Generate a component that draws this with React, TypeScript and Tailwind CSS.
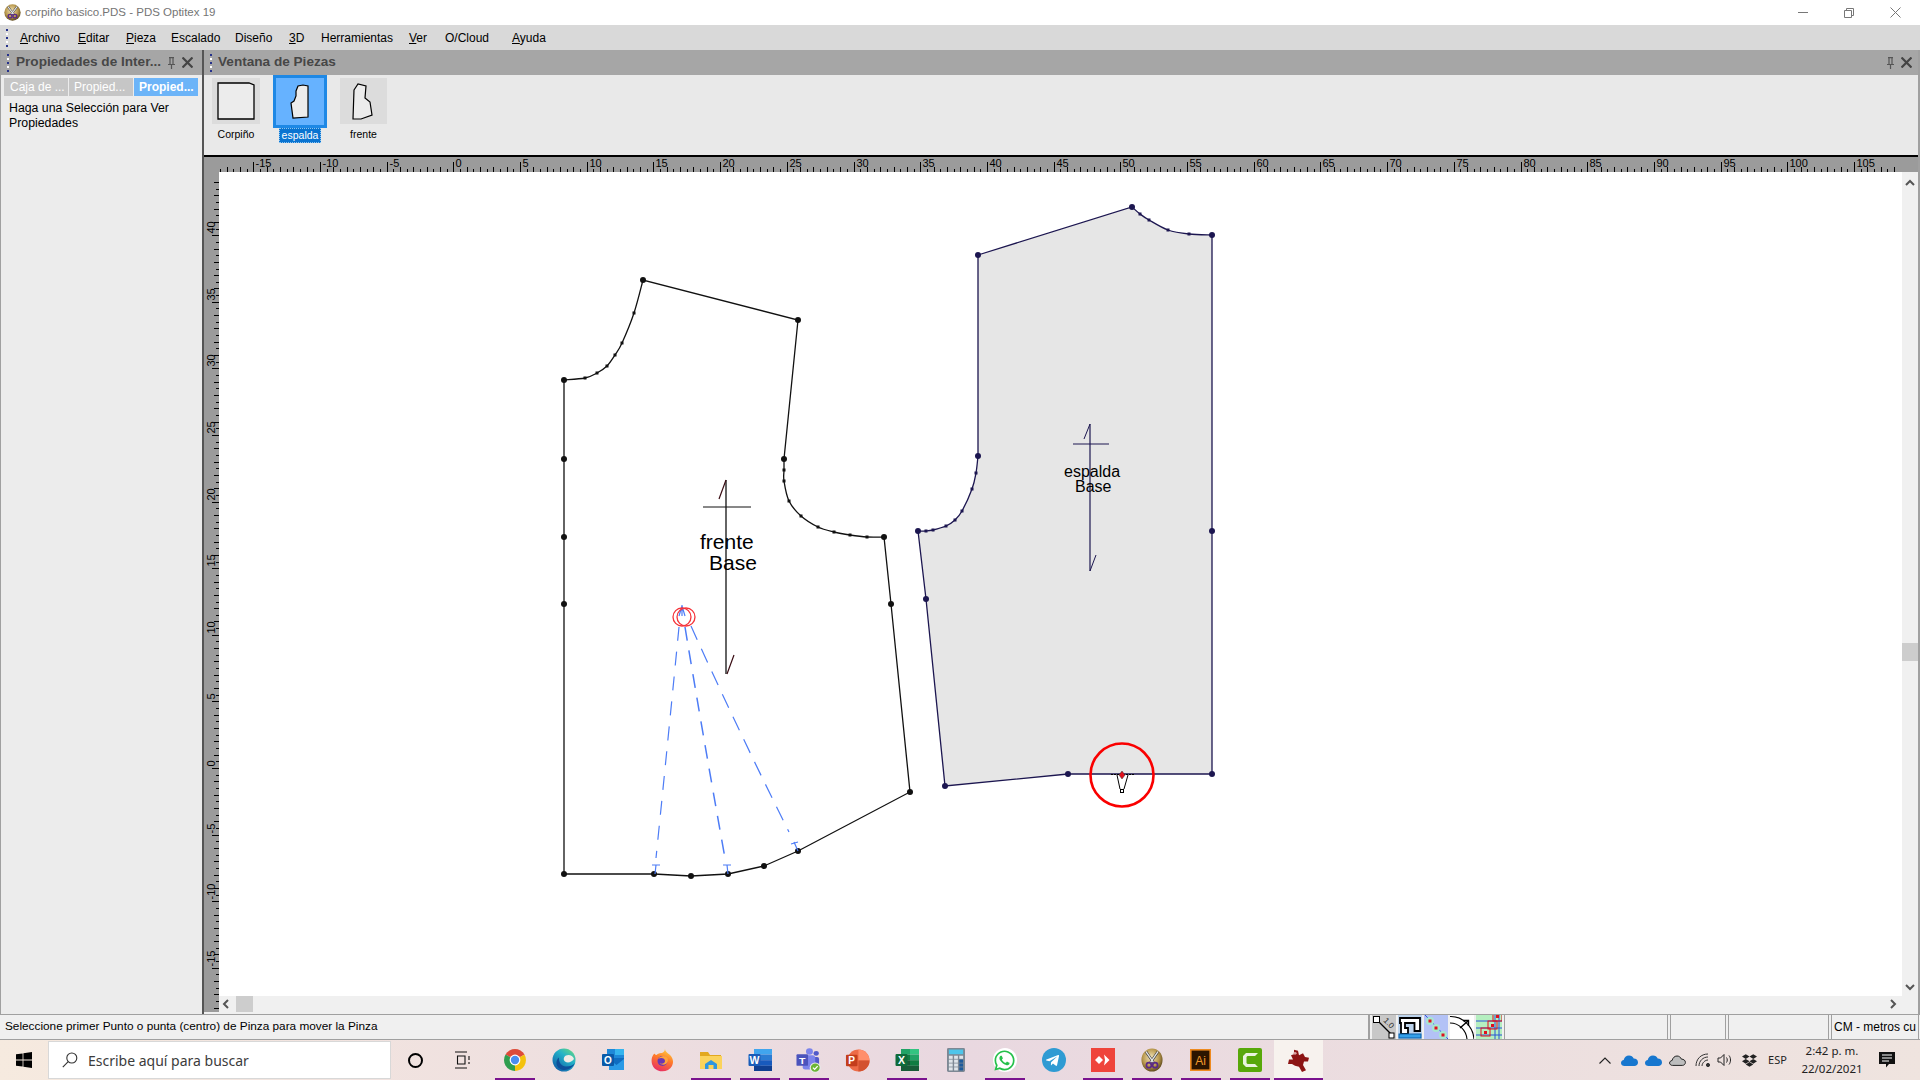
import { FaTelegramPlane, FaWhatsapp, FaDropbox } from "react-icons/fa";

type Pt = [number, number];

const menuItems: { label: string; key?: string; rest: string; w: string }[] = [
  { label: "Archivo", key: "A", rest: "rchivo", w: "w-[58px]" },
  { label: "Editar", key: "E", rest: "ditar", w: "w-[48px]" },
  { label: "Pieza", key: "P", rest: "ieza", w: "w-[45px]" },
  { label: "Escalado", rest: "Escalado", w: "w-[64px]" },
  { label: "Diseño", rest: "Diseño", w: "w-[54px]" },
  { label: "3D", key: "3", rest: "D", w: "w-[32px]" },
  { label: "Herramientas", rest: "Herramientas", w: "w-[88px]" },
  { label: "Ver", key: "V", rest: "er", w: "w-[36px]" },
  { label: "O/Cloud", rest: "O/Cloud", w: "w-[67px]" },
  { label: "Ayuda", key: "A", rest: "yuda", w: "w-[50px]" },
];

// Catmull-Rom through the points, for the curved seams
const smooth = (pts: Pt[]) => {
  let d = "";
  for (let i = 0; i < pts.length - 1; i++) {
    const p0 = pts[Math.max(i - 1, 0)];
    const p1 = pts[i];
    const p2 = pts[i + 1];
    const p3 = pts[Math.min(i + 2, pts.length - 1)];
    const c1 = [p1[0] + (p2[0] - p0[0]) / 6, p1[1] + (p2[1] - p0[1]) / 6];
    const c2 = [p2[0] - (p3[0] - p1[0]) / 6, p2[1] - (p3[1] - p1[1]) / 6];
    d += ` C${c1[0]} ${c1[1]} ${c2[0]} ${c2[1]} ${p2[0]} ${p2[1]}`;
  }
  return d;
};

const frenteNeck: Pt[] = [[564, 380], [585, 378], [597, 373], [607, 366], [615, 355], [622, 343], [634, 313], [643, 280]];
const frenteArm: Pt[] = [[784, 459], [784, 470], [784, 481], [789, 501], [801, 516], [818, 527], [834, 532], [850, 535], [867, 537], [884, 537]];
const frenteRest: Pt[] = [[891, 604], [910, 792], [798, 851], [764, 866], [728, 874], [691, 876], [654, 874], [564, 874], [564, 604], [564, 537], [564, 459]];

const espaldaNeck: Pt[] = [[1132, 207], [1140, 214], [1149, 220], [1168, 230], [1189, 234], [1212, 235]];
const espaldaArm: Pt[] = [[918, 531], [926, 531], [933, 530], [946, 526], [955, 520], [962, 511], [972, 489], [976, 473], [978, 456]];

const Dots = ({ pts, color, r = 3 }: { pts: Pt[]; color: string; r?: number }) => (
  <>
    {pts.map(([x, y], i) => (
      <circle key={i} cx={x} cy={y} r={r} fill={color} />
    ))}
  </>
);

const Squares = ({ pts, color }: { pts: Pt[]; color: string }) => (
  <>
    {pts.map(([x, y], i) => (
      <rect key={i} x={x - 1.5} y={y - 1.5} width={3} height={3} fill={color} />
    ))}
  </>
);

const PatternCanvas = () => {
  const black = "#111111";
  const navy = "#1c1650";
  const blue = "#4d7cf6";
  const frentePath =
    `M564 380${smooth(frenteNeck)} L798 320 L784 459${smooth(frenteArm)} ` +
    frenteRest.map((p) => `L${p[0]} ${p[1]}`).join(" ") +
    " Z";
  const espaldaPath =
    `M978 255 L1132 207${smooth(espaldaNeck)} L1212 774 L1068 774 L945 786 L926 599 L918 531${smooth(espaldaArm)} Z`;
  return (
    <svg className="block flex-1 h-full bg-white" viewBox="219 172 1683 824" width={1683} height={824}>
      {/* frente */}
      <path d={frentePath} fill="none" stroke={black} strokeWidth={1.3} />
      <Squares pts={frenteNeck.slice(1, -1)} color={black} />
      <Squares pts={frenteArm.slice(1, -1)} color={black} />
      <Dots
        pts={[[564, 380], [643, 280], [798, 320], [784, 459], [884, 537], [891, 604], [910, 792], [798, 851], [764, 866], [728, 874], [691, 876], [654, 874], [564, 874], [564, 604], [564, 537], [564, 459]]}
        color={black}
      />
      <path d="M726 480 L726 674" stroke={black} strokeWidth={1.3} />
      <path d="M703 507 L751 507" stroke={black} strokeWidth={1} />
      <path d="M726 480 L719 499 M727 674 L734 655" stroke="#3a0d14" strokeWidth={1.2} />
      <text x={700} y={549} fontSize={21} fontFamily="'Liberation Sans', sans-serif" fill="#000">frente</text>
      <text x={709} y={570} fontSize={21} fontFamily="'Liberation Sans', sans-serif" fill="#000">Base</text>

      {/* pinzas */}
      <g fill="none" stroke={blue} strokeWidth={1.2}>
        <path d="M679 627 Q668 740 656 858" strokeDasharray="14 11" />
        <path d="M685 627 Q702 730 725 858" strokeDasharray="14 10" strokeWidth={1.5} />
        <path d="M691 626 Q738 730 789 832" strokeDasharray="15 10" />
        <path d="M652 865 L660 865 M656 865 L655 874 M723 865 L731 865 M727 865 L728 874 M791 844 L798 842 M794 842 L798 851" />
        <path d="M682 605 L682 616 M682 606 L679 616 M682 606 L685 616" />
      </g>
      <circle cx={682} cy={617} r={9} fill="none" stroke="#f5333a" strokeWidth={1.3} />
      <circle cx={686} cy={617} r={9} fill="none" stroke="#f5333a" strokeWidth={1.3} />

      {/* espalda */}
      <path d={espaldaPath} fill="#e6e6e6" stroke={navy} strokeWidth={1.3} />
      <Squares pts={espaldaNeck.slice(1, -1)} color={navy} />
      <Squares pts={espaldaArm.slice(1, -1)} color={navy} />
      <Dots
        pts={[[978, 255], [1132, 207], [1212, 235], [1212, 531], [1212, 774], [1068, 774], [945, 786], [926, 599], [918, 531], [978, 456]]}
        color={navy}
      />
      <path d="M1090 424 L1090 571" stroke={navy} strokeWidth={1.2} />
      <path d="M1073 444 L1109 444" stroke={navy} strokeWidth={1} />
      <path d="M1090 424 L1084 439 M1090 571 L1096 555" stroke={navy} strokeWidth={1} />
      <text x={1064} y={477} fontSize={16} fontFamily="'Liberation Sans', sans-serif" fill="#000">espalda</text>
      <text x={1075} y={492} fontSize={16} fontFamily="'Liberation Sans', sans-serif" fill="#000">Base</text>

      {/* pinza a mover */}
      <path d="M1111 774.5 L1134 774.5" stroke="#000" strokeWidth={1.2} strokeDasharray="2 1" />
      <path d="M1117 775 L1120 789 M1128 775 L1124 789" stroke="#000" strokeWidth={1} />
      <rect x={1120.5} y={789.5} width={3} height={3} fill="#fff" stroke="#000" />
      <path d="M1122 771 L1125 775 L1122 779 L1119 775 Z" fill="#e0101c" stroke="#333" strokeWidth={0.5} />
      <circle cx={1122} cy={775} r={31.5} fill="none" stroke="#fa0000" strokeWidth={2.6} />
    </svg>
  );
};

const TopRuler = () => {
  const ticks = [];
  for (let i = -35; i <= 216; i++) {
    const x = Math.round(453.3 + i * 6.67) + 0.5 - 204;
    if (i % 10 === 0) {
      ticks.push(<path key={i} d={`M${x} 5 V15`} stroke="#000" />);
      ticks.push(
        <text key={`t${i}`} x={x + 2} y={10} fontSize={11} fontFamily="'Liberation Sans', sans-serif" fill="#000">
          {i / 2}
        </text>
      );
    } else {
      ticks.push(<path key={i} d={`M${x} ${i % 2 === 0 ? 10 : 12} V15`} stroke="#000" />);
    }
  }
  return (
    <svg className="block shrink-0 bg-[#9b9b9b]" width={1714} height={15}>
      {ticks}
    </svg>
  );
};

const LeftRuler = () => {
  const ticks = [];
  for (let i = -36; i <= 88; i++) {
    const y = Math.round(768 - i * 6.66) + 0.5 - 172;
    const val = i / 2;
    if (i % 10 === 0) {
      ticks.push(<path key={i} d={`M8 ${y} H15`} stroke="#000" />);
      ticks.push(
        <text
          key={`t${i}`}
          transform={`translate(11 ${y - 2}) rotate(-90)`}
          fontSize={11}
          fontFamily="'Liberation Sans', sans-serif"
          fill="#000"
        >
          {val}
        </text>
      );
    } else {
      ticks.push(<path key={i} d={`M${i % 2 === 0 ? 10 : 12} ${y} H15`} stroke="#000" />);
    }
  }
  return (
    <svg className="block shrink-0 bg-[#9b9b9b]" width={15} height={840}>
      {ticks}
    </svg>
  );
};

const Grip = () => (
  <div className="flex flex-col gap-[2px] w-[2px]">
    {[0, 1, 2, 3, 4].map((i) => (
      <div key={i} className={`w-[2px] h-[2px] ${i % 2 === 0 ? "bg-[#26328c]" : "bg-white"}`} />
    ))}
  </div>
);

const PinIcon = () => (
  <svg width="9" height="12" viewBox="0 0 9 12" fill="none" stroke="#555" strokeWidth="1.2">
    <path d="M2 0.7H7 M3 1V7 M6 1V7 M1 7.5H8 M4.5 8V12" />
  </svg>
);

const CloseX = () => (
  <svg width="11" height="11" viewBox="0 0 11 11" stroke="#444" strokeWidth="2.2">
    <path d="M0.5 0.5L10.5 10.5M10.5 0.5L0.5 10.5" />
  </svg>
);

const OptitexLogo = ({ w = 17, h = 17, id }: { w?: number; h?: number; id: string }) => (
  <svg width={w} height={h} viewBox="0 0 24 26" preserveAspectRatio="none">
    <defs>
      <radialGradient id={id} cx="0.45" cy="0.4" r="0.65">
        <stop offset="0" stopColor="#f3e6bd" />
        <stop offset="0.6" stopColor="#b8974b" />
        <stop offset="1" stopColor="#4c3a14" />
      </radialGradient>
    </defs>
    <ellipse cx="12" cy="13" rx="11.5" ry="12.5" fill={`url(#${id})`} />
    <path d="M5.5 4L14.5 17M18.5 4L9.5 17" stroke="#3d3d3d" strokeWidth="2.8" />
    <path d="M5.5 4L14.5 17M18.5 4L9.5 17" stroke="#e6e6e6" strokeWidth="1.5" />
    <circle cx="8.6" cy="18.6" r="2.7" fill="none" stroke="#5b2a86" strokeWidth="1.9" />
    <circle cx="15.4" cy="18.6" r="2.7" fill="none" stroke="#5b2a86" strokeWidth="1.9" />
  </svg>
);

const Chrome = () => (
  <svg width="24" height="24" viewBox="0 0 24 24">
    <path d="M12 12L2.5 6.5A11 11 0 0 1 21.5 6.5Z" fill="#dd4b39" />
    <path d="M12 12L21.5 6.5A11 11 0 0 1 12 23Z" fill="#f4c20d" />
    <path d="M12 12L12 23A11 11 0 0 1 2.5 6.5Z" fill="#2f9e4f" />
    <circle cx="12" cy="12" r="5.4" fill="#fff" />
    <circle cx="12" cy="12" r="4.2" fill="#4a8df0" />
  </svg>
);

const Edge = () => (
  <svg width="24" height="24" viewBox="0 0 24 24">
    <defs>
      <linearGradient id="edgeG" x1="0.9" y1="0.1" x2="0.2" y2="1">
        <stop offset="0" stopColor="#5fd38a" />
        <stop offset="0.35" stopColor="#25b3c8" />
        <stop offset="1" stopColor="#0f5ca8" />
      </linearGradient>
    </defs>
    <circle cx="12" cy="12" r="11.5" fill="url(#edgeG)" />
    <path d="M23 15C20 21 13 24 7.5 20.5C3.5 18 3.5 12 7 9.5C6.3 14 9.5 18.5 14 18.5C18 18.5 21 17.5 23 15Z" fill="#0e4f9a" />
    <path d="M22 11C21 7.5 17 6 14 7.5C11.5 8.7 11 12 13 13.5C15.5 15.3 19.5 14.5 22 11Z" fill="#f1ece6" />
  </svg>
);

const Outlook = () => (
  <svg width="24" height="24" viewBox="0 0 24 24">
    <rect x="6" y="1" width="17" height="11" fill="#1e88d8" />
    <rect x="14" y="1" width="9" height="6" fill="#35b4ee" />
    <path d="M8 10H23V22H8Z" fill="#0f6cc0" />
    <path d="M8 11L15.5 17L23 11V22H8Z" fill="#2a9ae6" />
    <rect x="1" y="6" width="12" height="12" rx="1" fill="#0a5aa8" />
    <text x="7" y="15.5" fontSize="10" fontWeight="700" textAnchor="middle" fill="#fff" fontFamily="'Liberation Sans', sans-serif">O</text>
  </svg>
);

const Firefox = () => (
  <svg width="24" height="24" viewBox="0 0 24 24">
    <defs>
      <linearGradient id="ffG" x1="0.7" y1="0" x2="0.3" y2="1">
        <stop offset="0" stopColor="#ffd23f" />
        <stop offset="0.45" stopColor="#ff7a2a" />
        <stop offset="1" stopColor="#e72b66" />
      </linearGradient>
    </defs>
    <path d="M15 0.5C15 4 18 5 20 7C23 10 24 14 22 18C19.5 23 13 24.5 8 22.5C3 20.5 0.5 15 2 9.5C3 6.5 4.5 5 5 6C5.5 7 6 7.5 7 6.5C8.5 5 11 5 12 5C14 4 15 2.5 15 0.5Z" fill="url(#ffG)" />
    <circle cx="12.5" cy="13" r="5" fill="#6a37b4" />
    <path d="M8 11C11 9 15 10 15 13C15 15.5 11.5 16.5 9.5 15C12 18 18 17 18 12C18 8 12 6 8 11Z" fill="#ffa33a" />
  </svg>
);

const Folder = () => (
  <svg width="24" height="24" viewBox="0 0 24 24">
    <path d="M1 4H9L11 7H22V20H1Z" fill="#e2a81f" />
    <rect x="1" y="8" width="22" height="13" fill="#fbd35c" />
    <path d="M6 21V16L12 12L18 16V21H14.5V17H9.5V21Z" fill="#2f96e0" />
  </svg>
);

const Word = () => (
  <svg width="24" height="24" viewBox="0 0 24 24">
    <rect x="6" y="1" width="18" height="5.6" fill="#41a5ee" />
    <rect x="6" y="6.6" width="18" height="5.6" fill="#2b7cd3" />
    <rect x="6" y="12.2" width="18" height="5.6" fill="#185abd" />
    <rect x="6" y="17.8" width="18" height="5.2" fill="#103f91" />
    <rect x="0.5" y="6" width="12" height="12" rx="1" fill="#1a5cb8" />
    <text x="6.5" y="15.8" fontSize="10.5" fontWeight="700" textAnchor="middle" fill="#fff" fontFamily="'Liberation Sans', sans-serif">W</text>
  </svg>
);

const Teams = () => (
  <svg width="25" height="25" viewBox="0 0 26 28" preserveAspectRatio="none">
    <circle cx="14" cy="4" r="3.6" fill="#7b83eb" />
    <circle cx="21" cy="6" r="2.7" fill="#5059c9" />
    <rect x="16" y="10" width="8" height="11" rx="2" fill="#5059c9" />
    <rect x="7" y="8" width="13" height="16" rx="2.5" fill="#7b83eb" />
    <rect x="0.5" y="7" width="12" height="13" rx="1" fill="#4b53bc" />
    <text x="6.5" y="17.5" fontSize="11" fontWeight="700" textAnchor="middle" fill="#fff" fontFamily="'Liberation Sans', sans-serif">T</text>
    <circle cx="20" cy="22" r="5.8" fill="#e8e8e8" />
    <circle cx="20" cy="22" r="4.6" fill="#6bb536" />
    <path d="M17.6 22L19.4 24L22.5 20.2" fill="none" stroke="#fff" strokeWidth="1.3" />
  </svg>
);

const PowerPoint = () => (
  <svg width="25" height="25" viewBox="0 0 26 26">
    <circle cx="14" cy="13" r="11.5" fill="#ed6c47" />
    <path d="M14 1.5A11.5 11.5 0 0 1 25.5 13H14Z" fill="#ff8f6b" />
    <path d="M14 13H25.5A11.5 11.5 0 0 1 14 24.5Z" fill="#d35230" />
    <rect x="1" y="7" width="12" height="12" rx="1" fill="#c43e1c" />
    <text x="7" y="16.8" fontSize="10.5" fontWeight="700" textAnchor="middle" fill="#fff" fontFamily="'Liberation Sans', sans-serif">P</text>
  </svg>
);

const Excel = () => (
  <svg width="24" height="24" viewBox="0 0 24 24">
    <rect x="6" y="1" width="9" height="5.6" fill="#21a366" />
    <rect x="15" y="1" width="9" height="5.6" fill="#33c481" />
    <rect x="6" y="6.6" width="9" height="5.6" fill="#107c41" />
    <rect x="15" y="6.6" width="9" height="5.6" fill="#21a366" />
    <rect x="6" y="12.2" width="9" height="5.6" fill="#185c37" />
    <rect x="15" y="12.2" width="9" height="5.6" fill="#107c41" />
    <rect x="6" y="17.8" width="18" height="5.2" fill="#185c37" />
    <rect x="0.5" y="6" width="12" height="12" rx="1" fill="#0f6b3a" />
    <text x="6.5" y="15.8" fontSize="10.5" fontWeight="700" textAnchor="middle" fill="#fff" fontFamily="'Liberation Sans', sans-serif">X</text>
  </svg>
);

const Calculator = () => (
  <svg width="18" height="24" viewBox="0 0 19 31" preserveAspectRatio="none">
    <rect width="19" height="31" rx="1.5" fill="#7d8894" />
    <rect x="2" y="2" width="15" height="6" fill="#4ec5ea" />
    {[10, 15, 20, 25].map((y) =>
      [2, 7.5, 13].map((x) => (
        <rect key={`${x}-${y}`} x={x} y={y} width="4" height="4" fill={x === 13 && y >= 15 ? "#1c5a9c" : "#dfe5ea"} />
      ))
    )}
  </svg>
);

const WhatsApp = () => (
  <div className="w-[24px] h-[24px] rounded-full bg-white flex items-center justify-center">
    <FaWhatsapp className="w-[23px] h-[23px] text-[#25c04a]" />
  </div>
);

const Telegram = () => (
  <div className="w-[24px] h-[24px] rounded-full bg-[#2f9bd3] flex items-center justify-center">
    <FaTelegramPlane className="w-[15px] h-[15px] text-white -ml-[2px]" />
  </div>
);

const AnyDesk = () => (
  <svg width="24" height="24" viewBox="0 0 24 24">
    <rect width="24" height="24" fill="#ef443b" />
    <path d="M8 8L12 12L8 16L4 12Z" fill="#fff" />
    <path d="M13 6.5L18.5 12L13 17.5L14 12Z" fill="#fff" />
  </svg>
);

const Illustrator = () => (
  <svg width="21" height="22" viewBox="0 0 21 22">
    <rect x="0.8" y="0.8" width="19.4" height="20.4" fill="#2b1500" stroke="#ee8a20" strokeWidth="1.6" />
    <text x="10.5" y="15.5" fontSize="12" textAnchor="middle" fill="#f29a2c" fontFamily="'Liberation Sans', sans-serif">Ai</text>
  </svg>
);

const Camtasia = () => (
  <svg width="24" height="24" viewBox="0 0 24 24">
    <rect width="24" height="24" rx="2" fill="#58a80a" />
    <path d="M20 5H8L5 8V16L8 19H20L17 16H9.5L8.5 15V9L9.5 8H17Z" fill="#e9f3dd" />
  </svg>
);

const Splat = () => (
  <svg width="24" height="25" viewBox="0 0 24 28" preserveAspectRatio="none">
    <path d="M7 2L11 3L12 8L16 6L18 10L22 11L21 15L17 15L16 19L19 25L15 27L12 21L8 20L5 18L1 18L2 13L6 13L4 8L7 7Z" fill="#8c1414" />
    <circle cx="8" cy="6" r="1.6" fill="#d9a4a4" />
  </svg>
);

const taskbarApps = [
  { icon: <Chrome />, open: true },
  { icon: <Edge />, open: false },
  { icon: <Outlook />, open: false },
  { icon: <Firefox />, open: false },
  { icon: <Folder />, open: true },
  { icon: <Word />, open: true },
  { icon: <Teams />, open: true },
  { icon: <PowerPoint />, open: false },
  { icon: <Excel />, open: true },
  { icon: <Calculator />, open: false },
  { icon: <WhatsApp />, open: true },
  { icon: <Telegram />, open: false },
  { icon: <AnyDesk />, open: true },
  { icon: <OptitexLogo w={22} h={24} id="goldTask" />, open: true },
  { icon: <Illustrator />, open: true },
  { icon: <Camtasia />, open: true },
];

const OneDrive = ({ color }: { color: string }) => (
  <svg width="17" height="11" viewBox="0 0 17 11">
    <path d="M3.5 11C1.5 11 0 9.7 0 8C0 6.5 1.2 5.3 2.7 5.1C3.2 2.6 5.3 0.5 8 0.5C10.2 0.5 11.9 1.8 12.7 3.6C15.2 3.6 17 5.3 17 7.4C17 9.4 15.4 11 13.3 11Z" fill={color} />
  </svg>
);

const StatusIcons = () => (
  <div className="flex items-stretch gap-[2px] w-[130px] h-[24px] overflow-hidden shrink-0">
    <svg width="24" height="24" viewBox="0 0 24 24" className="bg-[#c8c8c8] shrink-0">
      <path d="M4 4L21 21" stroke="#000" strokeWidth="1.2" />
      <rect x="1.5" y="1.5" width="6" height="6" fill="#fff" stroke="#000" />
      <rect x="17" y="18" width="5" height="5" fill="#fff" stroke="#000" />
      <text x="11" y="6" fontSize="8" fontFamily="'Liberation Sans', sans-serif" fill="#222" transform="rotate(45 11 6)">1.0</text>
    </svg>
    <svg width="24" height="24" viewBox="0 0 24 24" className="bg-[#bcd3ec] shrink-0">
      <path d="M2 3H22V16H16.5V8H7V13H10V19H3V8H2Z" fill="#fff" stroke="#000" strokeWidth="1.8" />
      <rect x="1" y="19" width="22" height="4" fill="#35a0e8" stroke="#0b5fa8" />
    </svg>
    <svg width="24" height="24" viewBox="0 0 24 24" className="bg-[#b3c2f6] shrink-0">
      <path d="M1 0L24 24" stroke="#2a55d6" />
      <circle cx="6" cy="6" r="4" fill="#a7e8cf" />
      <circle cx="12" cy="13" r="4" fill="#a7e8cf" />
      <circle cx="19" cy="20" r="4" fill="#a7e8cf" />
      <rect x="4.5" y="4.5" width="3" height="3" fill="#e0101c" />
      <rect x="10.5" y="11.5" width="3" height="3" fill="#e0101c" />
      <rect x="17.5" y="18.5" width="3" height="3" fill="#e0101c" />
    </svg>
    <svg width="24" height="24" viewBox="0 0 24 24" className="bg-white shrink-0" fill="none" stroke="#000" strokeWidth="1.1">
      <path d="M0 1.5C12 1 23 11 24 24M0 8C9 8 16 15 17 24" />
      <path d="M10 13L18 6M13 5.5L18.5 5.5L18.5 11" strokeWidth="1.4" />
    </svg>
    <svg width="26" height="24" viewBox="0 0 26 24" className="bg-[#b5efc0] shrink-0" fill="none">
      <path d="M0 6H26M0 13H26M0 20H26" stroke="#2a55d6" />
      <path d="M19 0V24M23 0V24" stroke="#2a55d6" />
      <rect x="17" y="-2" width="9" height="8" stroke="#e0101c" />
      <rect x="12" y="6" width="9" height="8" stroke="#e0101c" />
      <rect x="5" y="13" width="9" height="8" stroke="#e0101c" />
      <rect x="20" y="0" width="3" height="3" fill="#e0101c" />
      <rect x="15" y="9" width="3" height="3" fill="#e0101c" />
      <rect x="8" y="16" width="3" height="3" fill="#e0101c" />
    </svg>
  </div>
);

export default function App() {
  const sans = "font-['Liberation_Sans',Arial,sans-serif]";
  return (
    <div className={`w-[1920px] h-[1080px] flex flex-col overflow-hidden bg-[#f0f0f0] ${sans} text-[12px] text-black`}>
      {/* title bar */}
      <div className="h-[25px] shrink-0 bg-white flex items-center pl-[4px] text-[#757575]">
        <OptitexLogo id="goldTitle" />
        <span className="ml-[4px] text-[11.5px]">corpiño basico.PDS - PDS Optitex 19</span>
        <div className="ml-auto flex items-center">
          <div className="w-[46px] flex justify-center">
            <div className="w-[10px] h-px bg-[#777]" />
          </div>
          <div className="w-[46px] flex justify-center">
            <svg width="10" height="10" viewBox="0 0 10 10" fill="none" stroke="#777">
              <path d="M2.5 2.5V0.5H9.5V7.5H7.5M0.5 2.5H7.5V9.5H0.5Z" />
            </svg>
          </div>
          <div className="w-[46px] flex justify-center mr-[2px]">
            <svg width="11" height="11" viewBox="0 0 11 11" stroke="#777">
              <path d="M0.5 0.5L10.5 10.5M10.5 0.5L0.5 10.5" />
            </svg>
          </div>
        </div>
      </div>

      {/* menu */}
      <div className="h-[25px] shrink-0 bg-[#d9d9d9] flex items-center pl-[6px] pr-[2px]">
        <div className="w-[14px]">
          <Grip />
        </div>
        {menuItems.map((m) => (
          <div key={m.label} className={m.w}>
            {m.key && <span className="underline">{m.key}</span>}
            {m.rest}
          </div>
        ))}
      </div>

      {/* main */}
      <div className="h-[964px] shrink-0 flex border-l border-[#a0a0a0] border-r-2 border-r-[#a0a0a0]">
        {/* left panel */}
        <div className="w-[201px] shrink-0 flex flex-col bg-[#ececec]">
          <div className="h-[25px] bg-[#a6a6a6] flex items-center pl-[6px] text-[#474747]">
            <Grip />
            <span className="ml-[7px] text-[13.6px] font-bold whitespace-nowrap">Propiedades de Inter...</span>
            <div className="ml-[6px]">
              <PinIcon />
            </div>
            <div className="ml-[6px]">
              <CloseX />
            </div>
          </div>
          <div className="flex gap-px pl-[3px] mt-[3px] h-[18px] text-white">
            <div className="w-[64px] bg-[#c6c6c6] flex items-center pl-[6px]">Caja de ...</div>
            <div className="w-[64px] bg-[#c6c6c6] flex items-center pl-[5px]">Propied...</div>
            <div className="w-[64px] bg-[#6cb4f8] flex items-center pl-[5px] font-bold">Propied...</div>
          </div>
          <p className="mt-[5px] ml-[8px] w-[180px] leading-[15px] text-[12.3px]">Haga una Selección para Ver Propiedades</p>
        </div>
        <div className="w-[2px] shrink-0 bg-[#555]" />

        {/* right panel */}
        <div className="flex-1 min-w-0 flex flex-col">
          <div className="h-[25px] shrink-0 bg-[#a6a6a6] flex items-center pl-[6px] text-[#474747]">
            <Grip />
            <span className="ml-[6px] text-[13.6px] font-bold">Ventana de Piezas</span>
            <div className="ml-auto">
              <PinIcon />
            </div>
            <div className="ml-[6px] mr-[6px]">
              <CloseX />
            </div>
          </div>

          <div className="h-[82px] shrink-0 bg-[#e9e9e9] flex items-start pl-[8px] gap-[13px] border-b-2 border-black">
            <div className="w-[48px] mt-[3px] flex flex-col items-center">
              <div className="w-[48px] h-[46px] bg-[#dcdcdc] flex items-center justify-center">
                <svg width="38" height="38" viewBox="0 0 38 38">
                  <path d="M1 1H32L37 3V37H1Z" fill="#ececec" stroke="#000" strokeWidth="1.3" />
                </svg>
              </div>
              <span className="text-[10.5px] mt-[3px]">Corpiño</span>
            </div>
            <div className="w-[54px] flex flex-col items-center">
              <div className="w-[54px] h-[53px] bg-[#66b2ff] border-[3px] border-[#1e88e5] flex items-center justify-center">
                <svg width="20" height="36" viewBox="0 0 20 36">
                  <path d="M6 7L8 2L13 1L18 2V33L3 34L1 19L4 17L6 12Z" fill="#ececec" stroke="#000" strokeWidth="1.2" />
                </svg>
              </div>
              <span className="text-[10.5px] leading-[13px] px-[2px] bg-[#0a74d1] text-white border border-dotted border-[#8cc4f0]">espalda</span>
            </div>
            <div className="w-[47px] mt-[3px] flex flex-col items-center">
              <div className="w-[47px] h-[46px] bg-[#dcdcdc] flex items-center justify-center">
                <svg width="24" height="38" viewBox="0 0 24 38">
                  <path d="M2 8L6 2L14 4L13 16L18 20L20 33L9 37H1Z" fill="#ececec" stroke="#000" strokeWidth="1.2" />
                </svg>
              </div>
              <span className="text-[10.5px] mt-[3px]">frente</span>
            </div>
          </div>

          <TopRuler />
          <div className="flex flex-1 min-h-0">
            <LeftRuler />
            <div className="flex-1 min-w-0 flex flex-col">
              <div className="flex h-[824px] shrink-0">
                <PatternCanvas />
                {/* vertical scrollbar */}
                <div className="w-[16px] shrink-0 bg-[#f0f0f0] flex flex-col items-center">
                  <svg width="10" height="7" viewBox="0 0 10 7" className="mt-[7px]" fill="none" stroke="#555" strokeWidth="2">
                    <path d="M1 6L5 2L9 6" />
                  </svg>
                  <div className="mt-[457px] w-full h-[18px] bg-[#cdcdcd]" />
                  <svg width="10" height="7" viewBox="0 0 10 7" className="mt-[323px]" fill="none" stroke="#555" strokeWidth="2">
                    <path d="M1 1L5 5L9 1" />
                  </svg>
                </div>
              </div>
              {/* horizontal scrollbar */}
              <div className="h-[16px] shrink-0 bg-[#f0f0f0] flex items-center pl-[3px]">
                <svg width="7" height="10" viewBox="0 0 7 10" fill="none" stroke="#555" strokeWidth="2">
                  <path d="M6 1L2 5L6 9" />
                </svg>
                <div className="ml-[7px] w-[17px] h-[16px] bg-[#cdcdcd]" />
                <svg width="7" height="10" viewBox="0 0 7 10" className="ml-auto mr-[21px]" fill="none" stroke="#555" strokeWidth="2">
                  <path d="M1 1L5 5L1 9" />
                </svg>
              </div>
            </div>
          </div>
        </div>
      </div>

      {/* status bar */}
      <div className="h-[26px] shrink-0 bg-[#f0f0f0] flex items-stretch gap-[2px] border-y border-[#a0a0a0] text-[11.8px] pr-[1px]">
        <div className="w-[1370px] shrink-0 border-r-2 border-[#a0a0a0] flex items-center pl-[5px]">
          Seleccione primer Punto o punta (centro) de Pinza para mover la Pinza
        </div>
        <StatusIcons />
        <div className="w-[164px] shrink-0 border-x border-[#a0a0a0]" />
        <div className="w-[56px] shrink-0 border-x border-[#a0a0a0]" />
        <div className="w-[101px] shrink-0 border-x border-[#a0a0a0]" />
        <div className="flex-1 border-x border-[#a0a0a0] flex items-center pl-[2px] text-[12px] whitespace-nowrap overflow-hidden">
          CM - metros cu
        </div>
      </div>

      {/* taskbar */}
      <div className="h-[40px] shrink-0 flex items-center bg-linear-to-r from-[#f6eadf] via-[#e9d8e0] to-[#efe4df]">
        <div className="w-[48px] shrink-0 flex justify-center">
          <svg width="16" height="16" viewBox="0 0 16 16" fill="#000">
            <path d="M0 2.3L6.6 1.4V7.6H0ZM7.4 1.3L16 0V7.6H7.4ZM0 8.4H6.6V14.6L0 13.7ZM7.4 8.4H16V16L7.4 14.7Z" />
          </svg>
        </div>
        <div className="w-[343px] h-[38px] shrink-0 bg-white border border-[#d8d8d8] flex items-center pl-[13px]">
          <svg width="16" height="16" viewBox="0 0 16 16" fill="none" stroke="#333" strokeWidth="1.1">
            <circle cx="9.8" cy="6" r="5" />
            <path d="M6.2 9.6L0.8 15.2" />
          </svg>
          <span className="ml-[10px] font-['Noto_Sans',sans-serif] text-[14px] text-[#3c3c3c]">Escribe aquí para buscar</span>
        </div>
        <div className="w-[48px] shrink-0 flex justify-center">
          <div className="w-[15px] h-[15px] rounded-full border-2 border-black" />
        </div>
        <div className="w-[48px] shrink-0 mr-[3px] flex justify-center">
          <svg width="16" height="18" viewBox="0 0 16 18" fill="none" stroke="#111" strokeWidth="1.1">
            <path d="M0 1H12M0 17H12M2.5 5H10V13H2.5ZM14 5V9M14 11V13" />
          </svg>
        </div>
        {taskbarApps.map((a, i) => (
          <div key={i} className="w-[49px] h-[40px] shrink-0 relative flex items-center justify-center">
            {a.icon}
            {a.open && <div className="absolute bottom-0 left-[5px] w-[40px] h-[2px] bg-[#7a128e]" />}
          </div>
        ))}
        <div className="w-[49px] h-[40px] shrink-0 relative flex items-center justify-center bg-[#f7f2ee]">
          <Splat />
          <div className="absolute bottom-0 left-0 w-full h-[2px] bg-[#7a128e]" />
        </div>

        {/* tray */}
        <div className="ml-auto flex items-center shrink-0 text-[#222]">
          <div className="w-[24px] flex justify-center">
            <svg width="12" height="7" viewBox="0 0 12 7" fill="none" stroke="#222" strokeWidth="1.1">
              <path d="M0.5 6.5L6 1L11.5 6.5" />
            </svg>
          </div>
          <div className="w-[24px] flex justify-center">
            <OneDrive color="#1777cf" />
          </div>
          <div className="w-[24px] flex justify-center">
            <OneDrive color="#1777cf" />
          </div>
          <div className="w-[24px] flex justify-center">
            <svg width="17" height="11" viewBox="0 0 17 11">
              <path d="M3.5 10.4C1.8 10.4 0.6 9.3 0.6 8C0.6 6.7 1.6 5.7 3.1 5.5C3.6 3 5.5 1 8 1C10.2 1 11.6 2.3 12.4 4.1C14.8 4.1 16.4 5.5 16.4 7.4C16.4 9.2 15 10.4 13.3 10.4Z" fill="#bdbdbd" stroke="#222" />
            </svg>
          </div>
          <div className="w-[27px] flex justify-center">
            <svg width="16" height="14" viewBox="0 0 16 14" fill="none" stroke="#333" strokeWidth="1">
              <path d="M1 13C1 6 6 1 13 1M4 13C4 8 8 4 13 4M7 13C7 10 10 7 13 7" />
              <circle cx="13" cy="12" r="1.6" fill="#333" />
            </svg>
          </div>
          <div className="w-[18px] flex justify-center">
            <svg width="16" height="14" viewBox="0 0 16 14" fill="none" stroke="#222" strokeWidth="1">
              <path d="M1 5H3.5L7 1.5V12.5L3.5 9H1ZM9.5 4.5C10.5 6 10.5 8 9.5 9.5M12 2.5C14 5 14 9 12 11.5" />
            </svg>
          </div>
          <div className="w-[30px] flex justify-center">
            <FaDropbox className="w-[15px] h-[15px] text-[#222]" />
          </div>
          <div className="w-[27px] text-center text-[11px] font-['Noto_Sans',sans-serif]">ESP</div>
          <div className="w-[82px] text-center text-[11.5px] leading-[18px] font-['Noto_Sans',sans-serif]">
            <div>2:42 p. m.</div>
            <div>22/02/2021</div>
          </div>
          <div className="w-[28px] flex justify-center">
            <svg width="16" height="16" viewBox="0 0 16 16">
              <path d="M0 0H16V12H10L7 15.5V12H0Z" fill="#111" />
              <path d="M3 3H13M3 6H13M3 9H10" stroke="#fff" />
            </svg>
          </div>
          <div className="w-[19px]" />
        </div>
      </div>
    </div>
  );
}
